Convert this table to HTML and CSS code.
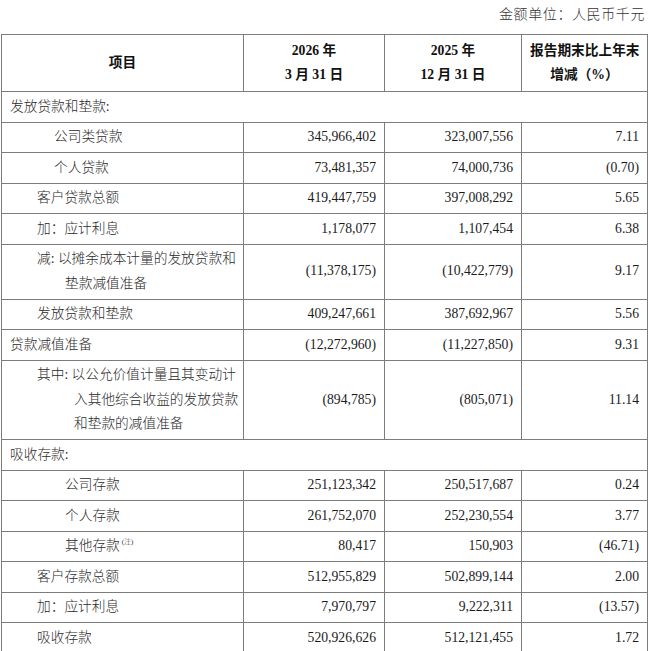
FILE: index.html
```html
<!DOCTYPE html>
<html lang="zh-CN">
<head>
<meta charset="utf-8">
<link rel="stylesheet" href="styles.css">
</head>
<body>
<div class="page">
  <div class="unit">金额单位：人民币千元</div>
  <table class="fin">
    <colgroup>
      <col class="c1"><col class="c2"><col class="c3"><col class="c4">
    </colgroup>
    <thead>
      <tr>
        <th>项目</th>
        <th>2026 年<br>3 月 31 日</th>
        <th>2025 年<br>12 月 31 日</th>
        <th>报告期末比上年末<br>增减（%）</th>
      </tr>
    </thead>
    <tbody>
      <tr><td colspan="4" class="l0">发放贷款和垫款:</td></tr>
      <tr><td class="l2">公司类贷款</td><td class="n">345,966,402</td><td class="n">323,007,556</td><td class="n">7.11</td></tr>
      <tr><td class="l2">个人贷款</td><td class="n">73,481,357</td><td class="n">74,000,736</td><td class="n">(0.70)</td></tr>
      <tr><td class="l1">客户贷款总额</td><td class="n">419,447,759</td><td class="n">397,008,292</td><td class="n">5.65</td></tr>
      <tr><td class="l1">加：应计利息</td><td class="n">1,178,077</td><td class="n">1,107,454</td><td class="n">6.38</td></tr>
      <tr><td class="l1 hang-a">减: 以摊余成本计量的发放贷款和<br>垫款减值准备</td><td class="n">(11,378,175)</td><td class="n">(10,422,779)</td><td class="n">9.17</td></tr>
      <tr><td class="l1">发放贷款和垫款</td><td class="n">409,247,661</td><td class="n">387,692,967</td><td class="n">5.56</td></tr>
      <tr><td class="l0">贷款减值准备</td><td class="n">(12,272,960)</td><td class="n">(11,227,850)</td><td class="n">9.31</td></tr>
      <tr><td class="l1 hang-b">其中: 以公允价值计量且其变动计<br>入其他综合收益的发放贷款<br>和垫款的减值准备</td><td class="n">(894,785)</td><td class="n">(805,071)</td><td class="n">11.14</td></tr>
      <tr><td colspan="4" class="l0">吸收存款:</td></tr>
      <tr><td class="l3">公司存款</td><td class="n">251,123,342</td><td class="n">250,517,687</td><td class="n">0.24</td></tr>
      <tr><td class="l3">个人存款</td><td class="n">261,752,070</td><td class="n">252,230,554</td><td class="n">3.77</td></tr>
      <tr><td class="l3">其他存款<sup class="note">(注)</sup></td><td class="n">80,417</td><td class="n">150,903</td><td class="n">(46.71)</td></tr>
      <tr><td class="l1">客户存款总额</td><td class="n">512,955,829</td><td class="n">502,899,144</td><td class="n">2.00</td></tr>
      <tr><td class="l1">加：应计利息</td><td class="n">7,970,797</td><td class="n">9,222,311</td><td class="n">(13.57)</td></tr>
      <tr><td class="l1">吸收存款</td><td class="n">520,926,626</td><td class="n">512,121,455</td><td class="n">1.72</td></tr>
    </tbody>
  </table>
</div>
</body>
</html>
```

FILE: styles.css
```css
html, body {
  margin: 0;
  padding: 0;
  background: #ffffff;
}

body {
  font-family: "Liberation Serif", "Noto Sans CJK SC", serif;
  color: #1e1e1e;
  font-size: 13.7px;
}

.page {
  padding: 5px 3px 0 1px;
}

.unit {
  text-align: right;
  font-size: 14px;
  letter-spacing: 0.6px;
  line-height: 20px;
  padding-right: 2px;
  margin-bottom: 9px;
  color: #333;
  font-weight: 300;
}

.fin {
  width: 646px;
  border-collapse: collapse;
  table-layout: fixed;
}

.c1 { width: 242px; }
.c2 { width: 141px; }
.c3 { width: 137px; }
.c4 { width: 126px; }

.fin th,
.fin td {
  border: 1px solid #7c7c7c;
  line-height: 24.5px;
  padding: 2.5px 8px;
  white-space: nowrap;
}

.fin th {
  font-weight: bold;
  text-align: center;
  padding-top: 3.5px;
  padding-bottom: 3.5px;
  color: #111;
}

.fin td {
  font-weight: 300;
  color: #2a2a2a;
}

.fin td.n {
  text-align: right;
  color: #1a1a1a;
  font-weight: normal;
}

.l0 { padding-left: 8px !important; }
.l1 { padding-left: 35px !important; }
.l2 { padding-left: 52px !important; }
.l3 { padding-left: 63px !important; }

.hang-a {
  padding-left: 63px !important;
  text-indent: -28px;
}

.hang-b {
  padding-left: 72px !important;
  text-indent: -37px;
}

.note {
  font-size: 7px;
  vertical-align: 6px;
  line-height: 0;
  margin-left: 2px;
}
```
